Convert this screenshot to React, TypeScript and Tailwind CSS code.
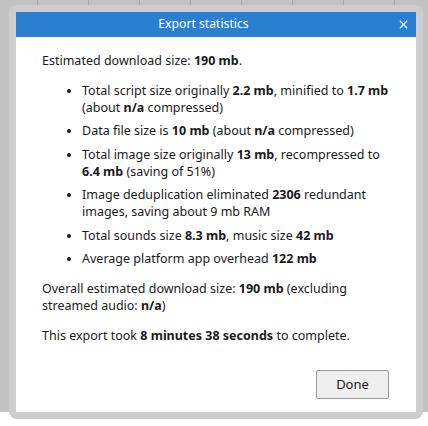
import { X } from 'lucide-react';

const FONT = { fontFamily: '"Segoe UI", "Noto Sans", "Open Sans", sans-serif' };

const B = ({ children }: { children: React.ReactNode }) => <b className="whitespace-nowrap">{children}</b>;

const ITEMS = [
  <>Total script size originally <B>2.2 mb</B>, minified to <B>1.7 mb</B> (about <B>n/a</B> compressed)</>,
  <>Data file size is <B>10 mb</B> (about <B>n/a</B> compressed)</>,
  <>Total image size originally <B>13 mb</B>, recompressed to <B>6.4 mb</B> (saving of 51%)</>,
  <>Image deduplication eliminated <B>2306</B> redundant images, saving about 9 mb RAM</>,
  <>Total sounds size <B>8.3 mb</B>, music size <B>42 mb</B></>,
  <>Average platform app overhead <B>122 mb</B></>,
];

function Backdrop() {
  return (
    <div className="flex h-[426px] w-[428px] bg-[#c2c2c2]">
      {/* left edge of the app behind */}
      <div className="flex w-[9px] flex-col overflow-hidden">
        <div className="h-[33px] border-b border-[#a8a8a8]" />
        <div className="h-[51px]" />
        <div className="flex h-[12px] flex-col justify-center bg-[#333]">
          <div className="h-[2px] bg-[#1e90c8]" />
        </div>
        <div className="h-[34px]" />
        <div className="h-[6px] bg-[#1e7fc0] [clip-path:polygon(0_0,100%_0,40%_100%)]" />
        <div className="h-[34px] border-t border-[#a8a8a8]" />
        <div className="h-[7px] bg-[#e8e8e8]" />
        <div className="h-[25px] bg-[#2166a8]" />
        <div className="flex-1 whitespace-nowrap bg-white pt-[10px] font-['Noto_Sans'] text-[12.5px] leading-[17px] text-[#222]">
          <div className="-ml-[6px]">sh</div>
          <div className="mt-[16px]">n</div>
          <div className="-ml-[2px]">te</div>
          <div className="mt-[13px]">e</div>
          <div className="mt-[13px] -ml-[3px] text-[#2020e0] underline">or</div>
          <div className="mt-[13px] -ml-[3px] text-[#2020e0] underline">or</div>
        </div>
      </div>
      {/* middle, mostly hidden by the dialog */}
      <div className="flex flex-1 flex-col">
        <div className="flex h-[33px]">
          <div className="h-[14px] w-[37px]" />
          {Array.from({ length: 8 }).map((_, i) => (
            <div key={i} className="h-[14px] w-[51px] shrink-0 border-l border-[#a8a8a8]" />
          ))}
        </div>
        <div className="flex-1" />
        <div className="flex h-[14px]">
          <div className="flex-1 bg-white" />
          <div className="w-[13px]" />
        </div>
      </div>
      {/* right edge */}
      <div className="flex w-[5px] flex-col">
        <div className="h-[77px]" />
        <div className="flex h-[11px] flex-col justify-center bg-[#333]">
          <div className="h-[2px] bg-[#1e90c8]" />
        </div>
        <div className="h-[24px] border-b border-[#a8a8a8]" />
        <div className="h-[75px] border-b border-[#a8a8a8]" />
        <div className="h-[50px] border-b border-[#a8a8a8]" />
        <div className="h-[25px]" />
        <div className="h-[45px] border-y border-l border-[#1e90c8] bg-[#c8d8e4]" />
        <div className="h-[8px]" />
        <div className="h-[5px] bg-[#333]" />
        <div className="h-[70px] border-b border-[#a8a8a8]" />
        <div className="flex-1" />
      </div>
    </div>
  );
}

export default function App() {
  return (
    <div className="relative h-[426px] w-[428px] overflow-hidden" style={FONT}>
      <Backdrop />
      <div className="absolute left-[9px] top-[5px] h-[414px] w-[414px] rounded-[8px] bg-[#cdcdcd] p-[7px]">
        <div className="flex h-full flex-col bg-white text-[12.5px] text-[#1a1a1a]">
          <div className="flex h-[25px] items-center bg-[#2b7fd0] text-white">
            <span className="flex-1 text-center text-[12.2px]">Export statistics</span>
            <button className="flex h-[25px] w-[25px] items-center justify-center text-white" aria-label="Close">
              <X size={13} strokeWidth={2.2} />
            </button>
          </div>
          <div className="flex flex-1 flex-col pl-[26px] pr-[14px] pt-[15px] leading-[17px]">
            <p>
              Estimated download size: <B>190 mb</B>.
            </p>
            <ul className="mt-[13px] flex list-disc flex-col gap-[6px] pl-[40px]">
              {ITEMS.map((item, i) => (
                <li key={i} className={i === 2 || i === 4 ? 'mt-[1px]' : ''}>
                  {item}
                </li>
              ))}
            </ul>
            <p className="mt-[13px]">
              Overall estimated download size: <B>190 mb</B> (excluding streamed audio: <B>n/a</B>)
            </p>
            <p className="mt-[13px]">
              This export took <B>8 minutes 38 seconds</B> to complete.
            </p>
            <div className="mt-auto flex justify-end pb-[13px] pr-[13px]">
              <button className="h-[29px] w-[73px] rounded-[2px] border border-[#9a9a9a] bg-[#efefef] text-[13px] text-[#1a1a1a]">
                Done
              </button>
            </div>
          </div>
        </div>
      </div>
    </div>
  );
}
